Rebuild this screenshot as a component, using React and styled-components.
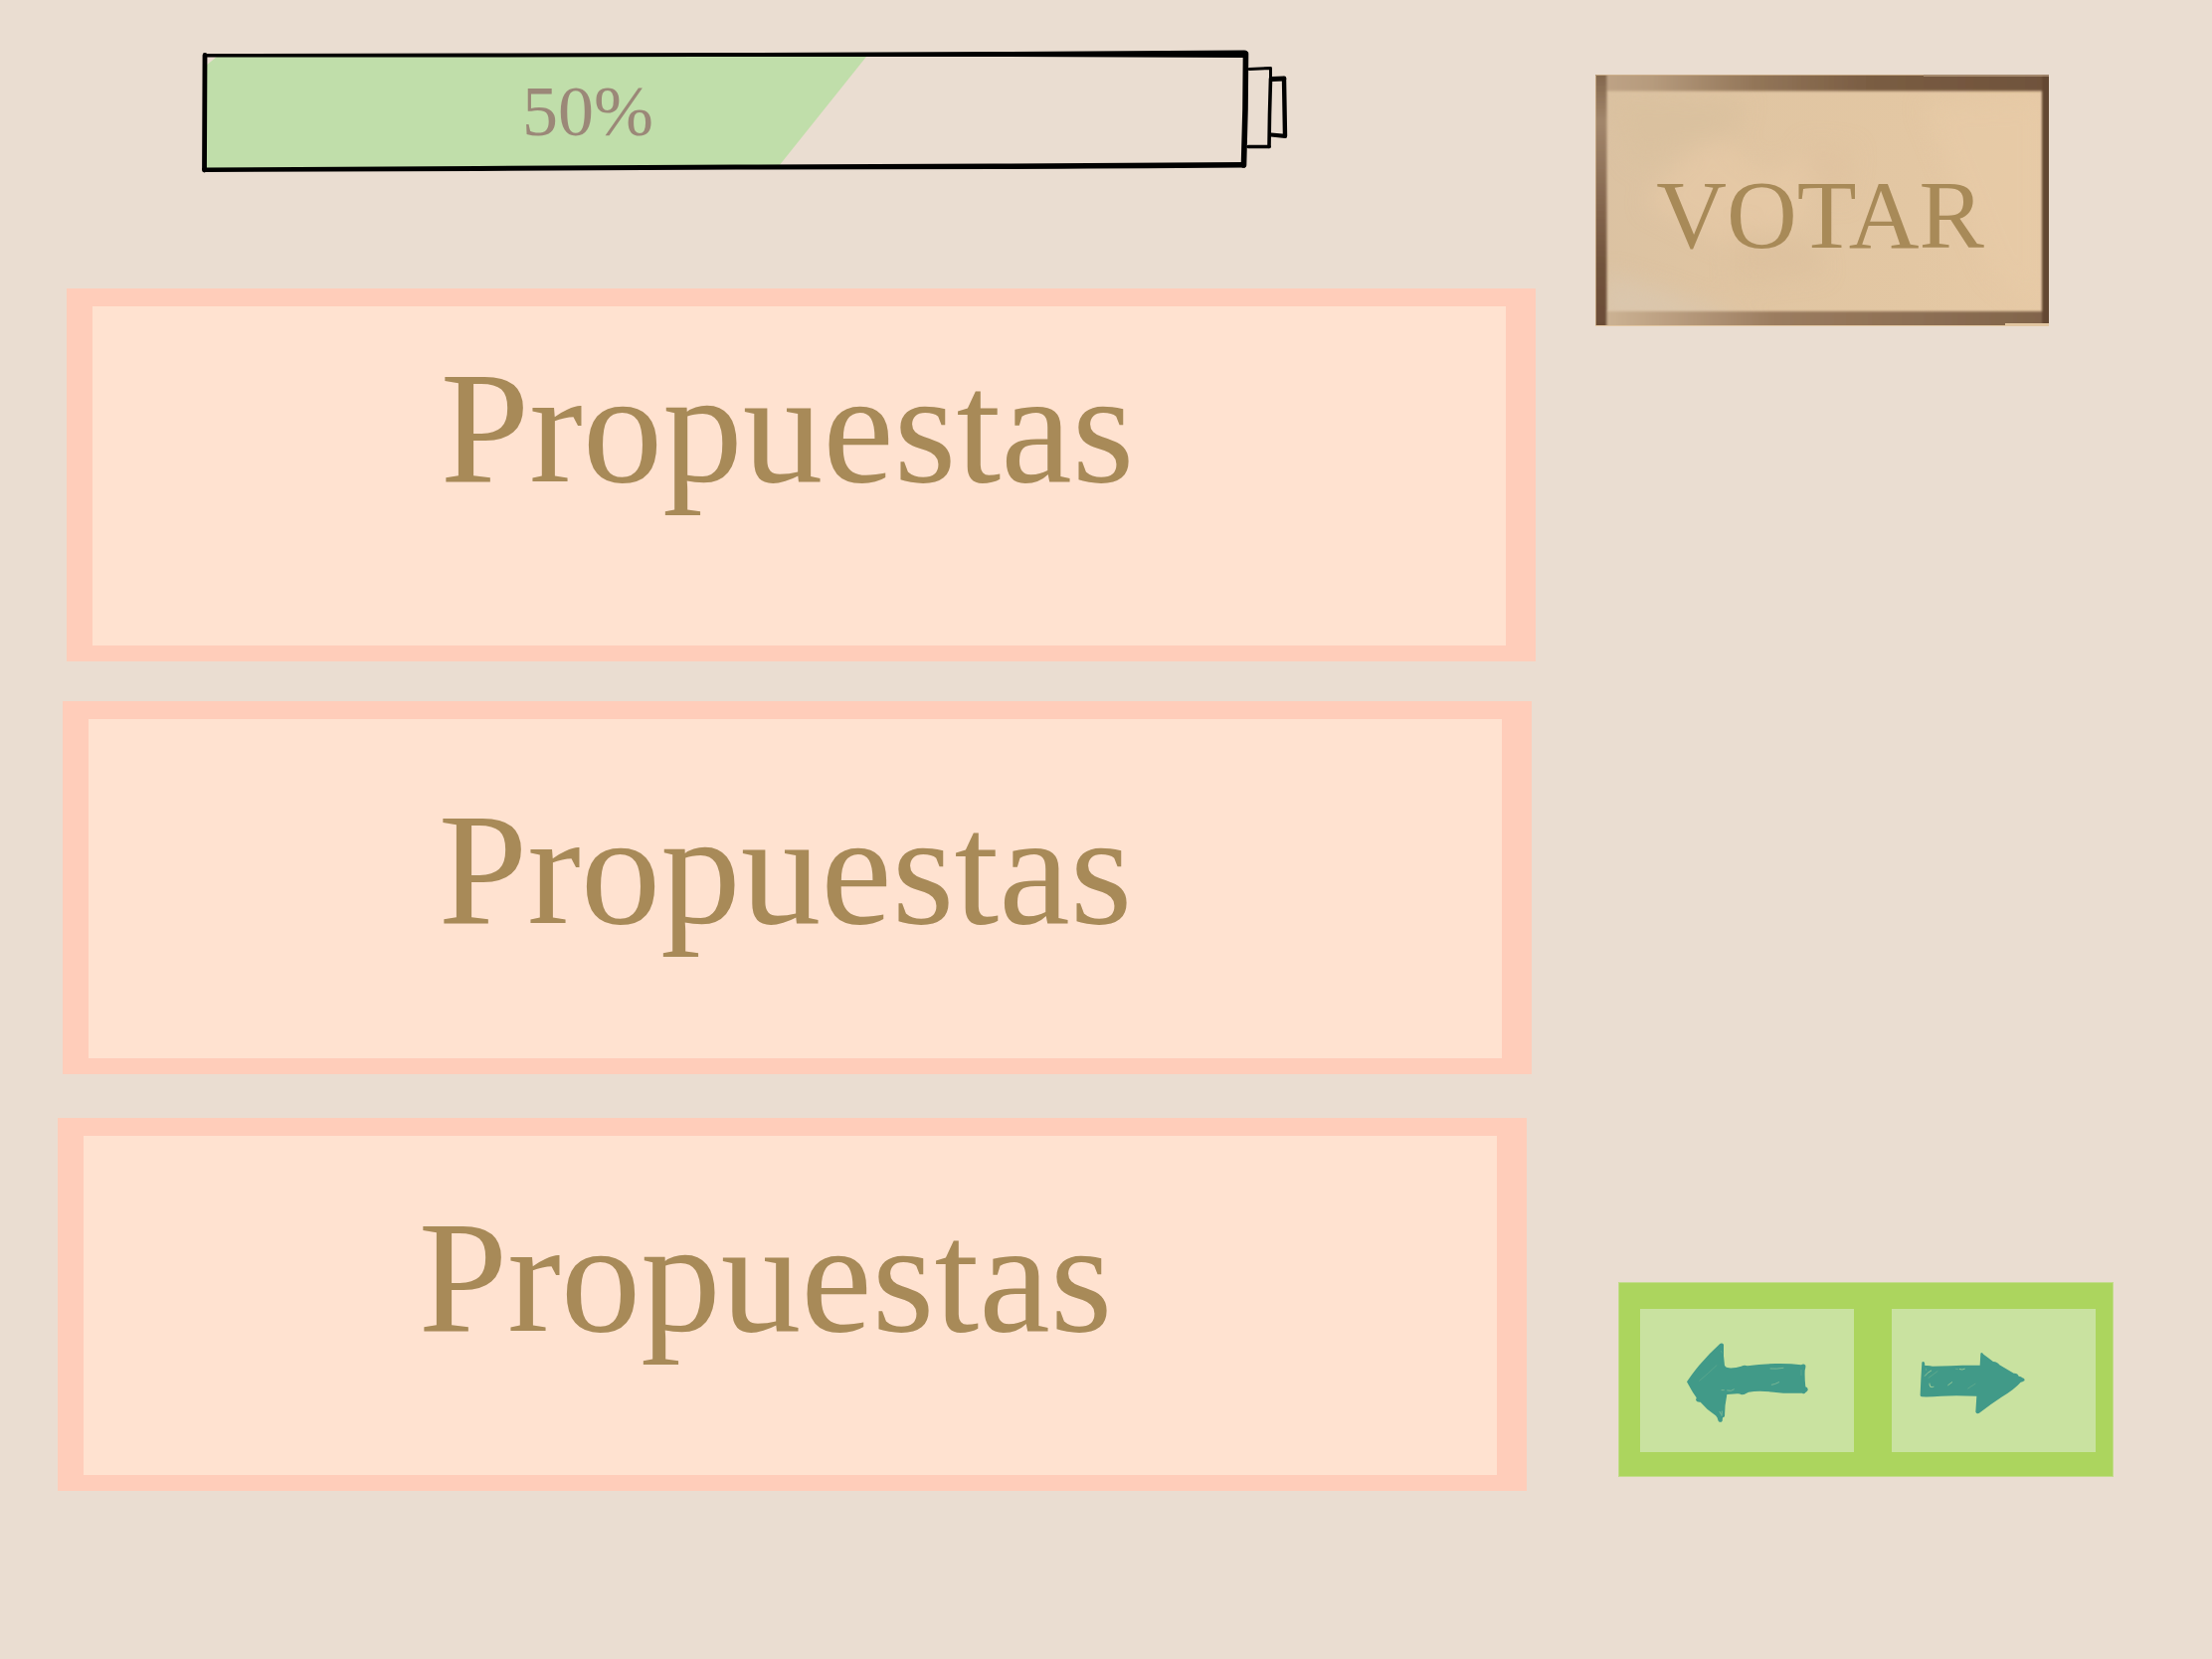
import React from "react";
import styled, { createGlobalStyle } from "styled-components";

const GlobalStyle = createGlobalStyle`
  *, *::before, *::after { box-sizing: border-box; }
  body {
    margin: 0;
    background: #eaddd1;
    font-family: "Liberation Serif", "Times New Roman", serif;
  }
  button { font: inherit; cursor: pointer; }
`;

const Page = styled.div`
  display: grid;
  grid-template-columns: minmax(0, 1fr) 680px;
  min-height: 100vh;
  align-items: start;
  align-content: start;
`;

const Main = styled.main`
  padding: 40px 0 0 58px;
`;

const Meter = styled.div`
  display: grid;
  max-width: 1100px;
  margin: 0 0 110px 142px;

  > * { grid-area: 1 / 1; }
`;

const BatteryArt = styled.svg`
  display: block;
  width: 100%;
  height: auto;
`;

const MeterValue = styled.span`
  z-index: 1;
  padding: 36px 0 0 325px;
  font-size: 72px;
  line-height: 72px;
  color: #9b8878;
`;

const Proposals = styled.ul`
  display: flex;
  flex-direction: column;
  gap: 40px;
  margin: 0;
  padding: 0;
  list-style: none;
`;

const Proposal = styled.li`
  min-height: 375px;
  margin: 0 ${(p) => 9 - p.$lead}px 0 ${(p) => p.$lead}px;
  padding: ${(p) => p.$top}px ${(p) => p.$end}px 0 0;
  border: solid #ffcdba;
  border-width: 18px 30px 16px 26px;
  background: #ffe2d0;

  &:last-child { margin-top: 4px; }
`;

const ProposalTitle = styled.h2`
  margin: 0;
  font-size: 161px;
  font-weight: 400;
  line-height: 164px;
  text-align: center;
  color: #a88a58;
`;

const Side = styled.aside`
  display: flex;
  flex-direction: column;
  justify-content: space-between;
  align-self: stretch;
  padding: 75px 99px 14px 60px;
`;

const VoteButton = styled.button`
  display: grid;
  width: 456px;
  height: 253px;
  padding: 0;
  border: 0;
  background: #e3c8a4;
  overflow: hidden;

  > * { grid-area: 1 / 1; }
`;

const VoteArt = styled.svg`
  display: block;
  width: 100%;
  height: 253px;
`;

const VoteLabel = styled.span`
  z-index: 1;
  padding: 91px 4px 0 0;
  font-size: 98px;
  line-height: 100px;
  color: #a88a58;
`;

const Pager = styled.nav`
  display: grid;
  grid-template-columns: 216fr 205fr;
  column-gap: 38px;
  margin-left: 23px;
  padding: 26px 17px 24px 21px;
  border: 1px solid #c3dc8c;
  background: #acd55e;
`;

const PagerButton = styled.button`
  display: flex;
  height: 144px;
  padding: 24px 0 0 ${(p) => p.$inset}px;
  border: 0;
  background: #c9e2a0;
`;

const ArrowArt = styled.svg`
  display: block;
  flex: none;
`;

function Battery({ value }) {
  return (
    <Meter role="meter" aria-label="Progreso" aria-valuemin={0} aria-valuemax={100} aria-valuenow={value}>
      <BatteryArt viewBox="200 40 1100 140" fill="none" stroke="#000" strokeLinecap="round" strokeLinejoin="round" aria-hidden="true">
        <path d="M218 57H871L783 167L207 170V66Z" fill="#c0deaa" stroke="none" />
        <path d="M204 56L206 54L480 53.500L740 53L1000 52L1251 50.500Q1255 50.500 1255 55V58L1000 57L700 57L480 57.500L206 57.500Z" fill="#000" stroke="none" />
        <path d="M206 55.500L205.500 171" strokeWidth="4.800" />
        <path d="M203 169L207 168.500L480 167L740 165.500L1000 164.500L1252 163V168.500Q1100 169.500 1000 170L740 170.500L480 172L207 173Q203 173 203 169Z" fill="#000" stroke="none" />
        <path d="M1252.500 54L1252 110L1250.500 166" strokeWidth="5.600" />
        <path d="M1256 69.500L1277.500 68.500V78" strokeWidth="3" />
        <path d="M1277.500 79L1276.500 115L1276 147.500" strokeWidth="3.600" />
        <path d="M1255 147.500H1276" strokeWidth="3.600" />
        <path d="M1279 79.500L1291 79" strokeWidth="4.800" />
        <path d="M1291 79L1292 136.500" strokeWidth="4.400" />
        <path d="M1278 135.500L1292 136.800" strokeWidth="4.200" />
      </BatteryArt>
      <MeterValue>{value}%</MeterValue>
    </Meter>
  );
}

function WoodPanel() {
  return (
    <VoteArt viewBox="0 0 456 253" preserveAspectRatio="none" aria-hidden="true">
      <defs>
        <linearGradient id="face" x1="0" y1="0" x2="1" y2="0">
          <stop offset="0" stopColor="#dbc2a2" />
          <stop offset="0.3" stopColor="#e0c5a2" />
          <stop offset="0.7" stopColor="#e3c7a3" />
          <stop offset="1" stopColor="#e7caa6" />
        </linearGradient>
        <linearGradient id="top" x1="0" y1="0" x2="1" y2="0">
          <stop offset="0" stopColor="#c0a588" />
          <stop offset="0.13" stopColor="#b69b7d" />
          <stop offset="0.35" stopColor="#937659" />
          <stop offset="0.6" stopColor="#7a5d43" />
          <stop offset="1" stopColor="#6f523b" />
        </linearGradient>
        <linearGradient id="bottom" x1="0" y1="0" x2="1" y2="0">
          <stop offset="0" stopColor="#d0b798" />
          <stop offset="0.15" stopColor="#bda183" />
          <stop offset="0.4" stopColor="#9b7c5f" />
          <stop offset="1" stopColor="#80634a" />
        </linearGradient>
        <linearGradient id="left" x1="0" y1="0" x2="0" y2="1">
          <stop offset="0" stopColor="#80644a" />
          <stop offset="0.2" stopColor="#a2866b" />
          <stop offset="0.5" stopColor="#866850" />
          <stop offset="0.75" stopColor="#71533c" />
          <stop offset="1" stopColor="#6b4c36" />
        </linearGradient>
        <filter id="soft" x="-10%" y="-10%" width="120%" height="120%">
          <feGaussianBlur stdDeviation="1.200" />
        </filter>
        <filter id="haze" x="-50%" y="-50%" width="200%" height="200%">
          <feGaussianBlur stdDeviation="11" />
        </filter>
      </defs>
      <rect width="456" height="253" fill="url(#face)" />
      <g filter="url(#haze)">
        <path d="M50 130Q80 90 120 60L170 100L220 80L210 150L130 170Z" fill="#e7caa6" opacity="0.6" />
        <path d="M140 150L220 170L230 200L140 210Z" fill="#dcc09d" opacity="0.6" />
        <path d="M210 70L260 75L250 130L215 100Z" fill="#dfc29e" opacity="0.6" />
        <path d="M10 200L60 215L160 250H0Z" fill="#dac7ae" opacity="0.9" />
        <path d="M10 20L150 25L140 60L40 90Z" fill="#dac09f" opacity="0.8" />
        <path d="M330 30L450 25V240L400 200Z" fill="#e7caa6" opacity="0.7" />
      </g>
      <g filter="url(#soft)">
        <rect x="-4" y="-4" width="464" height="20.500" fill="url(#top)" />
        <rect x="-4" y="238" width="464" height="20" fill="url(#bottom)" />
        <rect x="449" y="-4" width="12" height="260" fill="#644630" />
        <rect x="-4" y="-4" width="15.500" height="260" fill="url(#left)" />
      </g>
      <path d="M0.500 253V0.500H330" fill="none" stroke="#d2b48f" opacity="0.8" />
      <path d="M330 1H456" stroke="#d9bf9f" />
      <path d="M0 252.500H456" stroke="#e2c6a1" />
      <path d="M412 251.500H456" stroke="#e2c6a1" strokeWidth="3" />
    </VoteArt>
  );
}

function ArrowLeftArt() {
  return (
    <ArrowArt width="150" height="100" viewBox="0 0 450 300" fill="#419a88" aria-hidden="true">
      <path d="M48 148Q62 126 85 98Q116 62 148 33Q154 29 159 35L159 70L162 99Q166 106 175 106Q194 107 212 101Q222 96 231 100Q272 94 315 93Q358 92 393 97Q400 92 406 98Q407 104 404 113Q403 140 406 163Q414 165 413 173Q409 179 406 180Q402 187 396 182Q350 184 310 179Q265 174 234 179Q221 187 213 187Q206 183 200 184L169 186Q162 218 162 252Q159 256 156 256L155 266Q149 273 143 266Q140 254 135 250Q110 234 89 209Q78 210 75 203L77 196Q64 178 58 166Z" />
      <g fill="none" stroke="#93c39a" strokeWidth="2" strokeLinecap="round">
        <path d="M300 108Q318 110 339 106M304 157Q313 156 326 149M170 174Q182 178 190 171M153 173L160 173M147 238L151 246M153 250L154 237" />
        <path d="M86 145Q114 121 138 98M393 112V128M151 55L154 60" opacity="0.400" />
      </g>
    </ArrowArt>
  );
}

function ArrowRightArt() {
  return (
    <ArrowArt width="140" height="100" viewBox="0 0 420 300" fill="#419a88" aria-hidden="true">
      <path d="M52 89Q56 84 60 90L61 99Q75 98 84 101L140 100L175 98L227 98L229 62Q233 57 238 65Q252 75 267 87Q280 88 286 97L329 122Q341 121 344 131Q352 132 355 136Q364 138 361 145Q354 149 350 149Q332 170 292 194Q258 216 227 241Q219 248 214 239L217 191Q150 188 110 191Q78 194 51 193Q46 192 47 186L49 140Z" />
      <g fill="none" stroke="#a6cf98" strokeLinecap="round">
        <path d="M61 130Q69 119 80 114M75 153Q74 168 87 163M76 158Q76 166 81 164M166 110Q174 113 181 109M131 158L143 149" strokeWidth="2.400" />
        <path d="M72 136L99 116M191 168L213 154M154 109L161 110M64 108L65 113" strokeWidth="2" opacity="0.400" />
      </g>
    </ArrowArt>
  );
}

const proposals = [
  { id: 1, lead: 9, top: 40, end: 24 },
  { id: 2, lead: 5, top: 69, end: 20 },
  { id: 3, lead: 0, top: 60, end: 50 },
];

export default function App() {
  return (
    <>
      <GlobalStyle />
      <Page>
        <Main>
          <Battery value={50} />
          <Proposals>
            {proposals.map((p) => (
              <Proposal key={p.id} $lead={p.lead} $top={p.top} $end={p.end}>
                <ProposalTitle>Propuestas</ProposalTitle>
              </Proposal>
            ))}
          </Proposals>
        </Main>
        <Side>
          <VoteButton type="button">
            <WoodPanel />
            <VoteLabel>VOTAR</VoteLabel>
          </VoteButton>
          <Pager aria-label="Páginas">
            <PagerButton type="button" aria-label="Anterior" $inset={31}>
              <ArrowLeftArt />
            </PagerButton>
            <PagerButton type="button" aria-label="Siguiente" $inset={13}>
              <ArrowRightArt />
            </PagerButton>
          </Pager>
        </Side>
      </Page>
    </>
  );
}
